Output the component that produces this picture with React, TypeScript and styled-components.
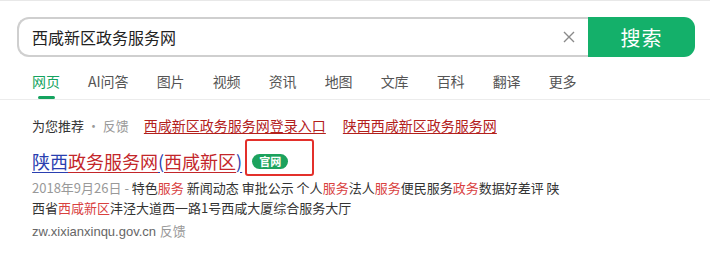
import React from 'react';
import styled, { createGlobalStyle } from 'styled-components';

const GlobalStyle = createGlobalStyle`
  html, body {
    margin: 0;
    padding: 0;
    background: #fff;
  }
  body {
    font-family: "Noto Sans CJK SC", "Liberation Sans", sans-serif;
    color: #333;
  }
`;

const Page = styled.div`
  width: 710px;
  height: 256px;
  border-top: 1px solid #e8e8e8;
  box-sizing: border-box;
  overflow: hidden;
`;

const SearchBar = styled.form`
  display: flex;
  height: 40px;
  margin: 16px 0 0 17px;
  width: 678px;
`;

const InputBox = styled.div`
  flex: 1;
  display: flex;
  align-items: center;
  border: 2px solid #cfcfcf;
  border-right: none;
  border-radius: 12px 0 0 12px;
  padding: 0 10px 0 13px;
  box-sizing: border-box;
`;

const Query = styled.span`
  flex: 1;
  font-size: 16px;
  color: #222;
`;

const ClearButton = styled.span`
  display: flex;
  width: 14px;
  height: 14px;
  margin-right: 2px;
`;

const SearchButton = styled.button`
  width: 107px;
  border: none;
  border-radius: 0 11px 11px 0;
  background: #14b06a;
  color: #fff;
  font-family: inherit;
  font-size: 20px;
  letter-spacing: 1px;
  padding: 0;
`;

const Tabs = styled.nav`
  display: flex;
  gap: 28px;
  padding: 0 0 0 32px;
  margin-top: 10px;
  border-bottom: 1px solid #ececec;
`;

const Tab = styled.span<{ $active?: boolean }>`
  position: relative;
  display: flex;
  flex-direction: column;
  align-items: center;
  height: 32px;
  font-size: 14px;
  line-height: 28px;
  color: ${(p) => (p.$active ? '#15a35f' : '#555')};

  &::after {
    content: '';
    display: ${(p) => (p.$active ? 'block' : 'none')};
    width: 17px;
    height: 3px;
    margin-top: 1px;
    border-radius: 2px;
    background: #15a35f;
  }
`;

const Results = styled.main`
  padding: 15px 0 0 32px;
`;

const Recommend = styled.div`
  display: flex;
  align-items: center;
  height: 20px;
  font-size: 13px;
`;

const RecLabel = styled.span`
  color: #333;
  margin-right: 15px;
`;

const Muted = styled.span`
  color: #999;
`;

const RecLink = styled.a`
  font-size: 14px;
  color: #b3201c;
  text-decoration: underline;
  text-underline-offset: 2px;
  margin-right: 17px;
`;

const Title = styled.h3`
  display: flex;
  align-items: center;
  margin: 13px 0 0;
  height: 26px;
  font-size: 18px;
  font-weight: normal;
`;

const TitleLink = styled.a<{ $hl?: boolean }>`
  color: ${(p) => (p.$hl ? '#c3262a' : '#2a3fb0')};
  text-decoration: underline;
  text-underline-offset: 3px;
`;

const BadgeWrap = styled.span`
  position: relative;
  margin-left: 10px;
  display: flex;
`;

const Badge = styled.span`
  display: inline-block;
  width: 36px;
  height: 15px;
  border-radius: 8px;
  background: #1ca25d;
  color: #fff;
  font-size: 11px;
  line-height: 15px;
  font-weight: bold;
  text-align: center;
`;

const Callout = styled.span`
  position: absolute;
  left: -7px;
  top: -15px;
  width: 69px;
  height: 37px;
  border: 2px solid #e3302b;
  border-radius: 3px;
  box-sizing: border-box;
`;

const Snippet = styled.p`
  margin: 4px 0 0;
  width: 540px;
  font-size: 13px;
  line-height: 20px;
  color: #333;
`;

const Em = styled.span`
  color: #d9413f;
`;

const Source = styled.div`
  margin-top: 4px;
  height: 20px;
  line-height: 20px;
  font-size: 13px;
  color: #666;
  font-family: "Liberation Sans", "Noto Sans CJK SC", sans-serif;
`;

const tabs = ['网页', 'AI问答', '图片', '视频', '资讯', '地图', '文库', '百科', '翻译', '更多'];

export default function App() {
  return (
    <Page>
      <GlobalStyle />
      <SearchBar onSubmit={(e) => e.preventDefault()}>
        <InputBox>
          <Query>西咸新区政务服务网</Query>
          <ClearButton>
            <svg width="14" height="14" viewBox="0 0 14 14">
              <path d="M2 2L12 12M12 2L2 12" stroke="#8a8a8a" strokeWidth="1.4" />
            </svg>
          </ClearButton>
        </InputBox>
        <SearchButton type="submit">搜索</SearchButton>
      </SearchBar>

      <Tabs>
        {tabs.map((t, i) => (
          <Tab key={t} $active={i === 0}>
            {t}
          </Tab>
        ))}
      </Tabs>

      <Results>
        <Recommend>
          <RecLabel>
            为您推荐 <Muted>· 反馈</Muted>
          </RecLabel>
          <RecLink>西咸新区政务服务网登录入口</RecLink>
          <RecLink>陕西西咸新区政务服务网</RecLink>
        </Recommend>

        <Title>
          <TitleLink>
            陕西<TitleLink $hl>政务服务网</TitleLink>(<TitleLink $hl>西咸新区</TitleLink>)
          </TitleLink>
          <BadgeWrap>
            <Badge>官网</Badge>
            <Callout />
          </BadgeWrap>
        </Title>

        <Snippet>
          <Muted>2018年9月26日 - </Muted>
          <span>特色</span>
          <Em>服务</Em>
          <span> 新闻动态 审批公示 个人</span>
          <Em>服务</Em>
          <span>法人</span>
          <Em>服务</Em>
          <span>便民服务</span>
          <Em>政务</Em>
          <span>数据好差评 陕</span>
          <span>西省</span>
          <Em>西咸新区</Em>
          <span>沣泾大道西一路1号西咸大厦综合服务大厅</span>
        </Snippet>

        <Source>
          zw.xixianxinqu.gov.cn <Muted>反馈</Muted>
        </Source>
      </Results>
    </Page>
  );
}
